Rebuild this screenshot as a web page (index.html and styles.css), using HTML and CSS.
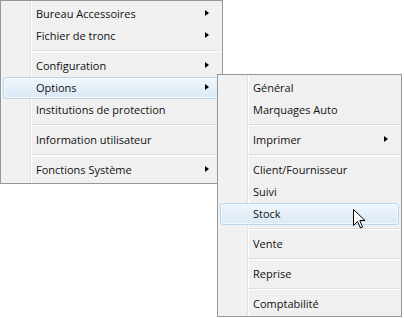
FILE: index.html
```html
<!DOCTYPE html>
<html>
<head>
<meta charset="utf-8">
<link rel="stylesheet" href="styles.css">
</head>
<body>
<div class="stage">
  <div class="menu menu-main">
    <div class="item sub">Bureau Accessoires<span class="arrow"></span></div>
    <div class="item sub">Fichier de tronc<span class="arrow"></span></div>
    <div class="sep"></div>
    <div class="item sub">Configuration<span class="arrow"></span></div>
    <div class="item sub active">Options<span class="arrow"></span></div>
    <div class="item">Institutions de protection</div>
    <div class="sep"></div>
    <div class="item">Information utilisateur</div>
    <div class="sep"></div>
    <div class="item sub">Fonctions Système<span class="arrow"></span></div>
  </div>
  <div class="menu menu-sub">
    <div class="item">Général</div>
    <div class="item">Marquages Auto</div>
    <div class="sep"></div>
    <div class="item sub">Imprimer<span class="arrow"></span></div>
    <div class="sep"></div>
    <div class="item">Client/Fournisseur</div>
    <div class="item">Suivi</div>
    <div class="item active">Stock</div>
    <div class="sep"></div>
    <div class="item">Vente</div>
    <div class="sep"></div>
    <div class="item">Reprise</div>
    <div class="sep"></div>
    <div class="item">Comptabilité</div>
  </div>
  <svg class="cursor" width="13" height="20" viewBox="0 0 13 20">
    <path d="M0.5 0.5 L0.5 16.5 L4.5 12.5 L7.5 19 L9.5 18 L6.8 11.5 L12 11.5 Z" fill="#fff" stroke="#000" stroke-width="1" stroke-linejoin="miter"/>
  </svg>
</div>
</body>
</html>
```

FILE: styles.css
```css
html, body {
  margin: 0;
  padding: 0;
  background: #ffffff;
}

.stage {
  position: relative;
  width: 404px;
  height: 318px;
  overflow: hidden;
  font-family: "Open Sans", "Noto Sans", sans-serif;
  font-size: 11px;
  color: #111;
}

.menu {
  position: absolute;
  box-sizing: border-box;
  border: 1px solid #979797;
  padding: 2px 0 1px 0;
  display: flex;
  flex-direction: column;
  background: linear-gradient(to right, #f1f1f1 0, #f1f1f1 29px, #e2e3e3 29px, #e2e3e3 30px, #ffffff 30px, #ffffff 31px, #f0f0f0 31px);
}

.menu-main {
  left: 0;
  top: 0;
  width: 223px;
  height: 184px;
}

.menu-sub {
  left: 217px;
  top: 74px;
  width: 185px;
  height: 243px;
}

.item {
  position: relative;
  height: 22px;
  line-height: 19px;
  margin: 0 2px;
  padding-left: 32px;
  box-sizing: border-box;
  border: 1px solid transparent;
  border-radius: 3px;
  white-space: nowrap;
}

.item.active {
  border-color: #b8d6ec;
  background: linear-gradient(to bottom, #f0f6fc 0%, #e4eff9 50%, #dbe9f6 100%);
  box-shadow: inset 0 0 0 1px rgba(255,255,255,0.6);
}

.arrow {
  position: absolute;
  right: 10px;
  top: 6px;
  width: 0;
  height: 0;
  border-top: 3.5px solid transparent;
  border-bottom: 3.5px solid transparent;
  border-left: 4px solid #000;
}

.sep {
  height: 1px;
  margin: 3px 0 3px 30px;
  background: #e0e0e0;
  border-bottom: 1px solid #ffffff;
}

.cursor {
  position: absolute;
  left: 353px;
  top: 209px;
}
```
